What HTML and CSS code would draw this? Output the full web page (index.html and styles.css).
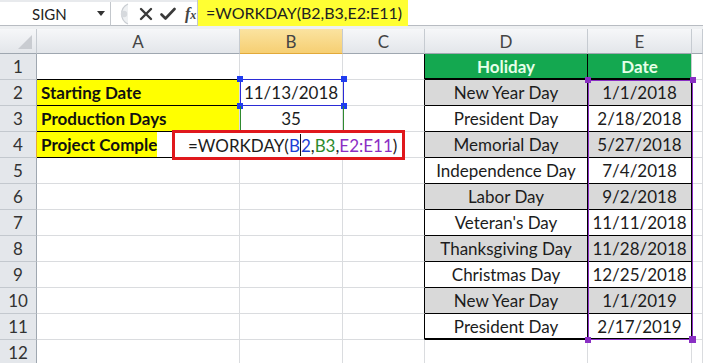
FILE: index.html
```html
<!DOCTYPE html>
<html>
<head>
<meta charset="utf-8">
<link rel="stylesheet" href="styles.css">
</head>
<body>
<div class="app">
  <div class="fbar">
    <div class="namebox">
      <span class="nb-text">SIGN</span>
      <svg class="nb-arrow" width="8" height="5" viewBox="0 0 8 5"><path d="M0 0H8L4 5Z" fill="#333"/></svg>
    </div>
    <div class="tools">
      <svg class="grip" width="16" height="22" viewBox="0 0 16 22"><path d="M15 1 A11 11 0 0 0 15 21" fill="#eef0f2" stroke="#c9cdd2" stroke-width="1.2"/><circle cx="11" cy="11" r="3.2" fill="#d6d9dd"/></svg>
      <svg class="ico" width="14" height="14" viewBox="0 0 14 14"><path d="M2 2L12 12M12 2L2 12" stroke="#3a3a3a" stroke-width="2.4" stroke-linecap="round"/></svg>
      <svg class="ico" width="16" height="14" viewBox="0 0 16 14"><path d="M1.5 7.5L5.5 11.5L14.5 2" fill="none" stroke="#3a3a3a" stroke-width="2.6" stroke-linecap="round" stroke-linejoin="round"/></svg>
      <span class="fx">f<span class="fx-x">x</span></span>
    </div>
    <div class="finput"><span class="fhl">=WORKDAY(B2,B3,E2:E11)</span></div>
  </div>

  <div class="sheet">
    <div class="hd corner"><svg width="14" height="14" viewBox="0 0 14 14"><path d="M14 0V14H0Z" fill="#c9ccd1"/></svg></div>
    <div class="hd">A</div>
    <div class="hd hsel">B</div>
    <div class="hd">C</div>
    <div class="hd">D</div>
    <div class="hd">E</div>
    <div class="hd"></div>

    <div class="rh">1</div>
    <div class="c bb"></div>
    <div class="c"></div>
    <div class="c br"></div>
    <div class="c tb th">Holiday</div>
    <div class="c tb th thr">Date</div>
    <div class="c"></div>

    <div class="rh">2</div>
    <div class="c lab bb">Starting Date</div>
    <div class="c ctr">11/13/2018</div>
    <div class="c br"></div>
    <div class="c tb g">New Year Day</div>
    <div class="c tb g">1/1/2018</div>
    <div class="c"></div>

    <div class="rh">3</div>
    <div class="c lab bb">Production Days</div>
    <div class="c ctr">35</div>
    <div class="c br"></div>
    <div class="c tb">President Day</div>
    <div class="c tb">2/18/2018</div>
    <div class="c"></div>

    <div class="rh rsel">4</div>
    <div class="c lab-short bb"><span class="clip">Project Comple</span></div>
    <div class="c"></div>
    <div class="c br"></div>
    <div class="c tb g">Memorial Day</div>
    <div class="c tb g">5/27/2018</div>
    <div class="c"></div>

    <div class="rh">5</div>
    <div class="c"></div>
    <div class="c"></div>
    <div class="c br"></div>
    <div class="c tb">Independence Day</div>
    <div class="c tb">7/4/2018</div>
    <div class="c"></div>

    <div class="rh">6</div>
    <div class="c"></div>
    <div class="c"></div>
    <div class="c br"></div>
    <div class="c tb g">Labor Day</div>
    <div class="c tb g">9/2/2018</div>
    <div class="c"></div>

    <div class="rh">7</div>
    <div class="c"></div>
    <div class="c"></div>
    <div class="c br"></div>
    <div class="c tb">Veteran's Day</div>
    <div class="c tb">11/11/2018</div>
    <div class="c"></div>

    <div class="rh">8</div>
    <div class="c"></div>
    <div class="c"></div>
    <div class="c br"></div>
    <div class="c tb g">Thanksgiving Day</div>
    <div class="c tb g">11/28/2018</div>
    <div class="c"></div>

    <div class="rh">9</div>
    <div class="c"></div>
    <div class="c"></div>
    <div class="c br"></div>
    <div class="c tb">Christmas Day</div>
    <div class="c tb">12/25/2018</div>
    <div class="c"></div>

    <div class="rh">10</div>
    <div class="c"></div>
    <div class="c"></div>
    <div class="c br"></div>
    <div class="c tb g">New Year Day</div>
    <div class="c tb g">1/1/2019</div>
    <div class="c"></div>

    <div class="rh">11</div>
    <div class="c"></div>
    <div class="c"></div>
    <div class="c br"></div>
    <div class="c tb last">President Day</div>
    <div class="c tb last">2/17/2019</div>
    <div class="c"></div>

    <div class="rh">12</div>
    <div class="c"></div>
    <div class="c"></div>
    <div class="c"></div>
    <div class="c"></div>
    <div class="c"></div>
    <div class="c"></div>
  </div>

  <div class="sel-b2"><i class="h h-tl"></i><i class="h h-tr"></i><i class="h h-bl"></i><i class="h h-br"></i></div>
  <div class="sel-b3"></div>
  <div class="sel-e"><i class="h p h-tl"></i><i class="h p h-tr"></i><i class="h p h-bl"></i><i class="h p h-br big"></i></div>
  <div class="editbox">=WORKDAY(<span class="rb">B</span><span class="caret"></span><span class="rb">2</span>,<span class="rg">B3</span>,<span class="rp">E2:E11</span>)</div>
</div>
</body>
</html>
```

FILE: styles.css
```css
* { box-sizing: border-box; }
body {
  margin: 0;
  background: #fff;
  font-family: Lato, "Open Sans", sans-serif;
  color: #1c1c1c;
}
.app {
  position: relative;
  width: 703px;
  height: 363px;
  overflow: hidden;
}

/* formula bar */
.fbar {
  display: flex;
  height: 29px;
  background: #e8eaed;
  padding-top: 2px;
  border-bottom: 3px solid #eef0f2;
}
.namebox {
  width: 111px;
  height: 24px;
  background: #fff;
  border-right: 1px solid #c3c7cc;
  border-bottom: 1px solid #b8bcc2;
  display: flex;
  align-items: center;
  padding-left: 32px;
  font-size: 15px;
  color: #222;
}
.nb-text { flex: 1; }
.nb-arrow { margin-right: 5px; }
.tools {
  width: 86px;
  height: 24px;
  background: #fff;
  border-bottom: 1px solid #b8bcc2;
  display: flex;
  align-items: center;
  gap: 7px;
  padding-left: 2px;
}
.grip { margin-right: 3px; }
.fx {
  font-family: "Liberation Serif", serif;
  font-style: italic;
  font-weight: bold;
  font-size: 16px;
  color: #444;
  margin-left: 2px;
}
.fx-x { font-size: 12px; }
.finput {
  flex: 1;
  background: #fff;
  border-left: 1px solid #c3c7cc;
  border-bottom: 1px solid #b8bcc2;
  margin-top: -2px;
  height: 26px;
}
.fhl {
  display: inline-block;
  height: 26px;
  line-height: 26px;
  background: #ffff33;
  padding: 0 6px 0 8px;
  font-size: 16px;
  color: #222;
}

/* sheet */
.sheet {
  display: grid;
  grid-template-columns: 37px 203px 103px 82px 163px 104px 1fr;
  grid-template-rows: 25px repeat(12, 26px);
}
.hd {
  background: linear-gradient(#f6f7f9, #e3e6ea);
  border-right: 1px solid #c6cbd1;
  border-bottom: 1px solid #9fa7b0;
  font-size: 17px;
  color: #444;
  display: flex;
  align-items: center;
  justify-content: center;
}
.corner {
  justify-content: flex-end;
  align-items: flex-end;
  padding: 0 4px 4px 0;
}
.hsel, .rsel {
  background: linear-gradient(#fbe3a0, #f6cf73);
  border-bottom-color: #e2a93a;
}
.rh {
  background: #e4e7eb;
  border-right: 1px solid #9fa7b0;
  border-bottom: 1px solid #c3c8ce;
  font-size: 17px;
  color: #333;
  display: flex;
  align-items: center;
  justify-content: center;
}
.rsel { border-right-color: #e2a93a; }
.c {
  border-right: 1px solid #dadcdf;
  border-bottom: 1px solid #dadcdf;
  font-size: 17px;
  display: flex;
  align-items: center;
  white-space: nowrap;
  overflow: hidden;
}
.bb { border-bottom-color: #000; }
.br { border-right-color: #000; }
.lab {
  background: #ffff00;
  font-weight: bold;
  padding-left: 4px;
  color: #111;
}
.lab-short {
  font-weight: bold;
  color: #111;
}
.clip {
  display: block;
  width: 120px;
  height: 100%;
  line-height: 25px;
  padding-left: 4px;
  background: #ffff00;
  overflow: hidden;
}
.ctr { justify-content: center; }
.tb {
  border-right-color: #000;
  border-bottom-color: #000;
  justify-content: center;
}
.g { background: #d9d9d9; }
.th {
  background: #14a850;
  color: #e6ffe8;
  font-weight: bold;
  border-bottom: 2px solid #000;
}
.thr { border-right-color: #c8ccd0; }
.last { border-bottom: 2px solid #000; }

/* overlays: selection ranges and cell editor */
.sel-b2 {
  position: absolute;
  left: 240px;
  top: 79px;
  width: 104px;
  height: 27px;
  border: 1px solid #2b2bd6;
}
.sel-b3 {
  position: absolute;
  left: 240px;
  top: 106px;
  width: 104px;
  height: 26px;
  border-left: 1px solid #2f8a2f;
  border-right: 1px solid #2f8a2f;
}
.sel-e {
  position: absolute;
  left: 588px;
  top: 80px;
  width: 105px;
  height: 260px;
  border: 1px solid #8a2fc4;
}
.h {
  position: absolute;
  width: 6px;
  height: 6px;
  background: #1f3cf0;
}
.h.p { background: #8a2fc4; }
.h-tl { left: -4px; top: -4px; }
.h-tr { right: -4px; top: -4px; }
.h-bl { left: -4px; bottom: -4px; }
.h-br { right: -4px; bottom: -4px; }
.h.big { width: 7px; height: 7px; }
.editbox {
  position: absolute;
  left: 172px;
  top: 130px;
  width: 233px;
  height: 30px;
  border: 3px solid #e0181c;
  background: #fff;
  font-size: 17px;
  color: #1c1c1c;
  display: flex;
  align-items: center;
  padding-left: 13px;
  white-space: nowrap;
}
.rb { color: #1d3fd6; }
.rg { color: #2c8a2c; }
.rp { color: #8b2fc4; }
.caret {
  display: inline-block;
  width: 1px;
  height: 22px;
  background: #111;
}
```
